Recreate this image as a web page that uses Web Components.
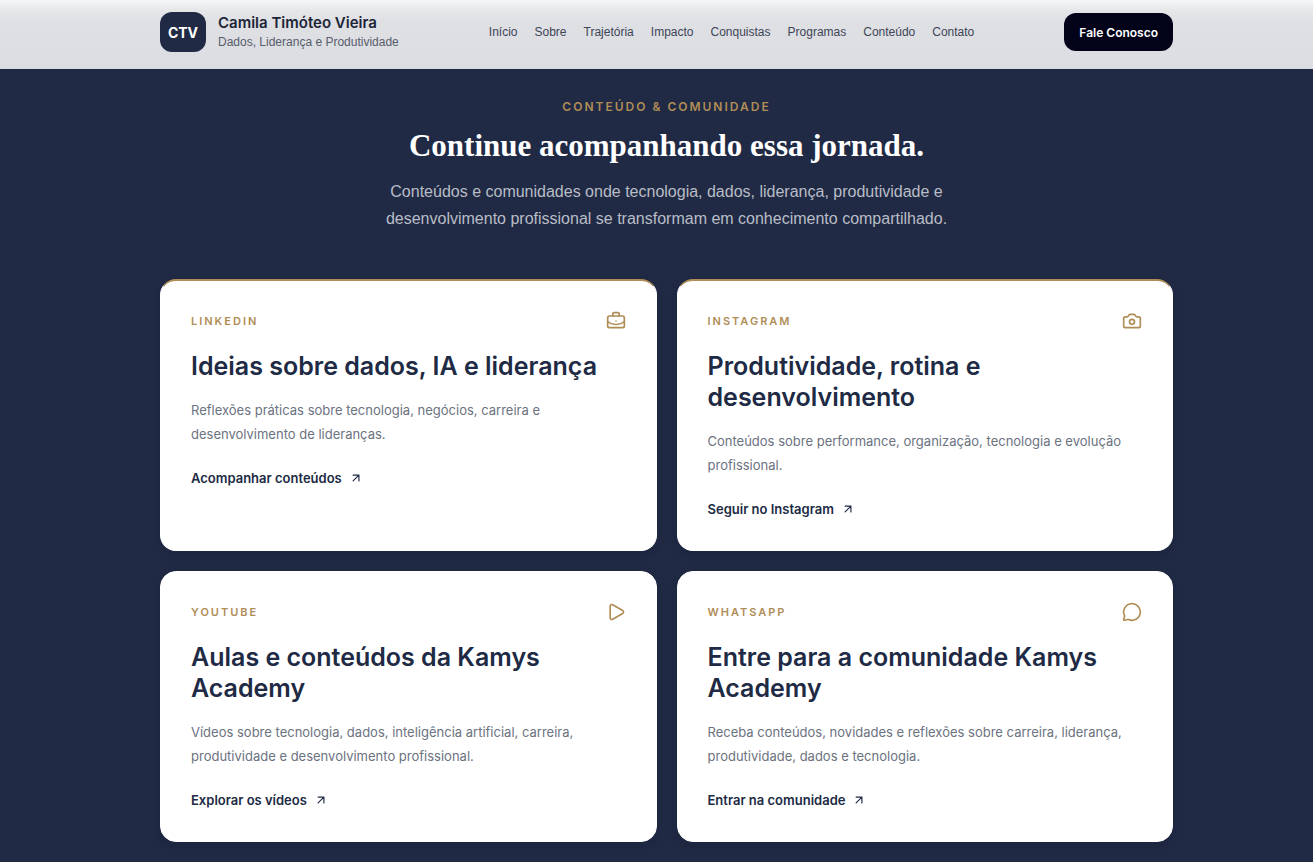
<!DOCTYPE html>
<html lang="pt-BR">
<head>
<meta charset="utf-8">
<meta name="viewport" content="width=device-width, initial-scale=1">
<title>Camila Timóteo Vieira</title>
<style>
    :root {
        --navy: #202a44;
        --gold: #b08d57;
        --page-left: 160px;
        --page-right: 140px;
        --plain-font: "Liberation Sans", Arial, sans-serif;
    }

    body {
        margin: 0;
        background: var(--navy);
        font-family: Inter, "Liberation Sans", sans-serif;
    }
</style>
</head>
<body>
    <site-header>
        <nav-link href="#inicio">Início</nav-link>
        <nav-link href="#sobre">Sobre</nav-link>
        <nav-link href="#trajetoria">Trajetória</nav-link>
        <nav-link href="#impacto">Impacto</nav-link>
        <nav-link href="#conquistas">Conquistas</nav-link>
        <nav-link href="#programas">Programas</nav-link>
        <nav-link href="#conteudo">Conteúdo</nav-link>
        <nav-link href="#contato">Contato</nav-link>
    </site-header>

    <content-section>
        <span slot="eyebrow">Conteúdo &amp; Comunidade</span>
        <span slot="title">Continue acompanhando essa jornada.</span>
        <span slot="intro">Conteúdos e comunidades onde tecnologia, dados, liderança, produtividade e desenvolvimento profissional se transformam em conhecimento compartilhado.</span>

        <channel-card channel="LinkedIn" icon="briefcase" href="#linkedin" action="Acompanhar conteúdos" accent>
            <span slot="title">Ideias sobre dados, IA e liderança</span>
            Reflexões práticas sobre tecnologia, negócios, carreira e desenvolvimento de lideranças.
        </channel-card>
        <channel-card channel="Instagram" icon="camera" href="#instagram" action="Seguir no Instagram" accent>
            <span slot="title">Produtividade, rotina e desenvolvimento</span>
            Conteúdos sobre performance, organização, tecnologia e evolução profissional.
        </channel-card>
        <channel-card channel="YouTube" icon="play" href="#youtube" action="Explorar os vídeos">
            <span slot="title">Aulas e conteúdos da Kamys Academy</span>
            Vídeos sobre tecnologia, dados, inteligência artificial, carreira, produtividade e desenvolvimento profissional.
        </channel-card>
        <channel-card channel="WhatsApp" icon="message" href="#whatsapp" action="Entrar na comunidade">
            <span slot="title">Entre para a comunidade Kamys Academy</span>
            Receba conteúdos, novidades e reflexões sobre carreira, liderança, produtividade, dados e tecnologia.
        </channel-card>
    </content-section>

<script>
class NavLink extends HTMLElement {

    constructor() {
        super();
        this.shadowDOM = this.attachShadow({ mode: "open" });
    }

    connectedCallback() {
        this.render();
    }

    render() {
        this.shadowDOM.innerHTML = `
            <style>
                :host {
                    display: block;
                }

                a {
                    display: block;
                    color: #3d4557;
                    font-family: var(--plain-font);
                    font-size: 12px;
                    line-height: 18px;
                    text-decoration: none;
                    white-space: nowrap;
                }

                a:hover {
                    color: var(--gold);
                }
            </style>

            <a href="${this.getAttribute("href")}"><slot></slot></a>
        `;
    }
}

customElements.define("nav-link", NavLink);

class SiteHeader extends HTMLElement {

    constructor() {
        super();
        this.shadowDOM = this.attachShadow({ mode: "open" });
    }

    connectedCallback() {
        this.render();
    }

    render() {
        this.shadowDOM.innerHTML = `
            <style>
                * {
                    box-sizing: border-box;
                }

                :host {
                    display: block;
                }

                header {
                    display: flex;
                    align-items: center;
                    justify-content: space-between;
                    padding: 12px var(--page-right) 16px var(--page-left);
                    background: linear-gradient(#f6f7f8 0, #e6e7e9 10px, #dfe0e4 22px, #dcdde2 100%);
                    border-bottom: 1px solid #d6dade;
                }

                .brand {
                    display: flex;
                    align-items: center;
                    gap: 12px;
                    color: #1c2438;
                    text-decoration: none;
                }

                .mark {
                    display: grid;
                    place-items: center;
                    width: 46px;
                    height: 40px;
                    border-radius: 12px;
                    background: var(--navy);
                    color: #fff;
                    font-size: 14px;
                    font-weight: 700;
                }

                .name {
                    display: block;
                    font-size: 15px;
                    font-weight: 600;
                    line-height: 20px;
                }

                .role {
                    display: block;
                    color: #565d6c;
                    font-family: var(--plain-font);
                    font-size: 12px;
                    line-height: 18px;
                }

                nav {
                    display: flex;
                    gap: 17px;
                }

                button {
                    height: 38px;
                    padding: 0 15px;
                    border: 0;
                    border-radius: 12px;
                    background: #020318;
                    color: #fff;
                    font-family: inherit;
                    font-size: 12px;
                    font-weight: 600;
                    cursor: pointer;
                }
            </style>

            <header>
                <a class="brand" href="#inicio">
                    <span class="mark">CTV</span>
                    <span>
                        <span class="name">Camila Timóteo Vieira</span>
                        <span class="role">Dados, Liderança e Produtividade</span>
                    </span>
                </a>
                <nav><slot></slot></nav>
                <button type="button">Fale Conosco</button>
            </header>
        `;
    }
}

customElements.define("site-header", SiteHeader);

class ContentSection extends HTMLElement {

    constructor() {
        super();
        this.shadowDOM = this.attachShadow({ mode: "open" });
    }

    connectedCallback() {
        this.render();
    }

    render() {
        this.shadowDOM.innerHTML = `
            <style>
                * {
                    margin: 0;
                    box-sizing: border-box;
                }

                :host {
                    display: block;
                }

                section {
                    padding: 28px var(--page-right) 20px var(--page-left);
                }

                .intro {
                    max-width: 600px;
                    margin: 0 auto 47px;
                    text-align: center;
                }

                .eyebrow {
                    color: var(--gold);
                    font-size: 12px;
                    font-weight: 600;
                    letter-spacing: 2px;
                    line-height: 20px;
                    text-transform: uppercase;
                }

                h2 {
                    margin: 9px 0 12px;
                    color: #fff;
                    font-family: "Liberation Serif", "Times New Roman", serif;
                    font-size: 31px;
                    font-weight: 700;
                    line-height: 40px;
                }

                .lead {
                    color: #b9bdc7;
                    font-family: var(--plain-font);
                    font-size: 16px;
                    line-height: 27px;
                }

                .grid {
                    display: grid;
                    grid-template-columns: repeat(2, 1fr);
                    gap: 20px;
                }

                @media (max-width: 850px) {
                    .grid {
                        grid-template-columns: 1fr;
                    }
                }
            </style>

            <section>
                <div class="intro">
                    <p class="eyebrow"><slot name="eyebrow"></slot></p>
                    <h2><slot name="title"></slot></h2>
                    <p class="lead"><slot name="intro"></slot></p>
                </div>
                <div class="grid"><slot></slot></div>
            </section>
        `;
    }
}

customElements.define("content-section", ContentSection);

const icons = {
    briefcase: `
        <path d="M12 12h.01"/>
        <path d="M16 6V4a2 2 0 0 0-2-2h-4a2 2 0 0 0-2 2v2"/>
        <path d="M22 13a18.15 18.15 0 0 1-20 0"/>
        <rect width="20" height="14" x="2" y="6" rx="2"/>`,
    camera: `
        <path d="M14 4a2 2 0 0 1 1.76 1.05l.49.9A2 2 0 0 0 18 7h2a2 2 0 0 1 2 2v9a2 2 0 0 1-2 2H4a2 2 0 0 1-2-2V9a2 2 0 0 1 2-2h2a2 2 0 0 0 1.76-1.05l.49-.9A2 2 0 0 1 10 4z"/>
        <circle cx="12" cy="13" r="3"/>`,
    play: `
        <path d="M5 5a2 2 0 0 1 3.008-1.728l11.997 6.998a2 2 0 0 1 .003 3.458l-12 7A2 2 0 0 1 5 19z"/>`,
    message: `
        <path d="M2.992 16.342a2 2 0 0 1 .094 1.167l-1.065 3.29a1 1 0 0 0 1.236 1.168l3.413-.998a2 2 0 0 1 1.099.092 10 10 0 1 0-4.777-4.719"/>`
};

class ChannelCard extends HTMLElement {

    constructor() {
        super();
        this.shadowDOM = this.attachShadow({ mode: "open" });
    }

    connectedCallback() {
        this.render();
    }

    render() {
        this.shadowDOM.innerHTML = `
            <style>
                * {
                    margin: 0;
                    box-sizing: border-box;
                }

                :host {
                    display: block;
                    box-sizing: border-box;
                    padding: 30px;
                    border: 1px solid #fff;
                    border-radius: 16px;
                    background: #fff;
                    box-shadow: 0 4px 12px rgba(10, 16, 36, 0.15);
                }

                /* gold line on top of the card */
                :host([accent]) {
                    border-top: 2px solid var(--gold);
                }

                svg {
                    display: block;
                    fill: none;
                    stroke: currentColor;
                    stroke-width: 2;
                    stroke-linecap: round;
                    stroke-linejoin: round;
                }

                .top {
                    display: flex;
                    align-items: center;
                    justify-content: space-between;
                    color: var(--gold);
                }

                .channel {
                    font-size: 11px;
                    font-weight: 600;
                    letter-spacing: 2px;
                    line-height: 20px;
                    text-transform: uppercase;
                }

                h3 {
                    margin-top: 20px;
                    color: var(--navy);
                    font-size: 25px;
                    font-weight: 600;
                    line-height: 31px;
                }

                p {
                    margin: 16px 0 22px;
                    color: #6b7280;
                    font-size: 13px;
                    line-height: 24px;
                }

                a {
                    display: inline-flex;
                    align-items: center;
                    gap: 7px;
                    margin-bottom: 1px;
                    color: var(--navy);
                    font-size: 13px;
                    font-weight: 600;
                    line-height: 20px;
                    text-decoration: none;
                    vertical-align: top;
                }
            </style>

            <div class="top">
                <span class="channel">${this.getAttribute("channel")}</span>
                <svg width="20" height="20" viewBox="0 0 24 24" aria-hidden="true">${icons[this.getAttribute("icon")]}</svg>
            </div>
            <h3><slot name="title"></slot></h3>
            <p><slot></slot></p>
            <a href="${this.getAttribute("href")}">
                ${this.getAttribute("action")}
                <svg width="14" height="14" viewBox="0 0 24 24" aria-hidden="true"><path d="M7 7h10v10M7 17 17 7"/></svg>
            </a>
        `;
    }
}

customElements.define("channel-card", ChannelCard);
</script>
</body>
</html>
